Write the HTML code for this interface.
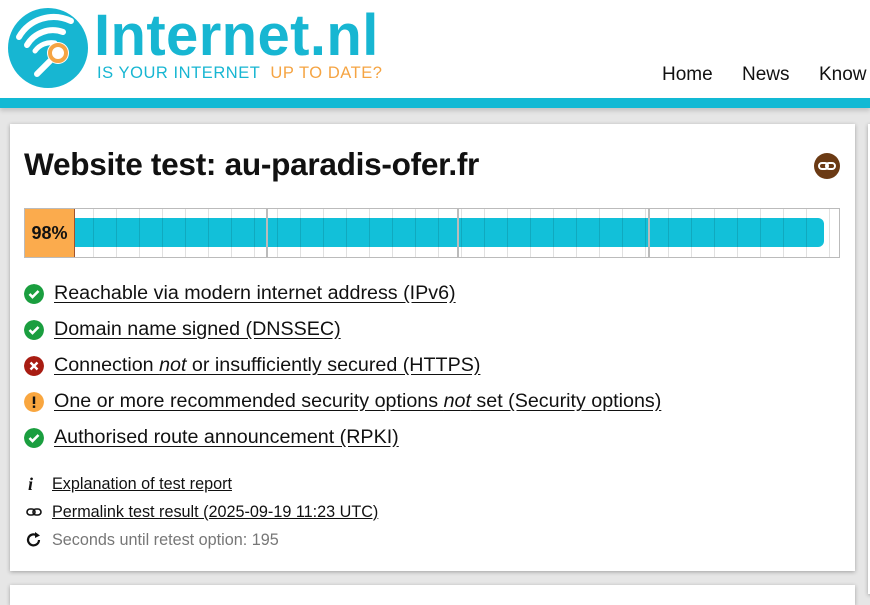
<!DOCTYPE html>
<html><head><meta charset="utf-8"><style>
*{margin:0;padding:0;box-sizing:border-box}
body{width:870px;height:590px;overflow:hidden;background:#e6e6e6;font-family:"Liberation Sans",sans-serif;position:relative}
.hdr{position:absolute;left:0;top:0;width:870px;height:98px;background:#fff}
.bar{position:absolute;left:0;top:98px;width:870px;height:10px;background:#12b9d4;box-shadow:0 3px 4px rgba(0,0,0,.15)}
.brand{position:absolute;left:94px;top:2px;font-size:58px;font-weight:bold;color:#17b6d2;letter-spacing:0.4px}
.tag{position:absolute;left:97px;top:64px;font-size:16.5px;color:#17b6d2;letter-spacing:0.55px}
.tag span{color:#f5a443}
.nav{position:absolute;top:64px;font-size:19px;color:#111}
.card{position:absolute;left:10px;top:124px;width:845px;height:447px;background:#fff;box-shadow:0 1px 4px rgba(0,0,0,.3)}
.card2{position:absolute;left:10px;top:585px;width:845px;height:20px;background:#fff;box-shadow:0 1px 4px rgba(0,0,0,.3)}
.card3{position:absolute;left:868px;top:124px;width:20px;height:470px;background:#fff;box-shadow:0 1px 4px rgba(0,0,0,.3)}
h1{position:absolute;left:14px;top:22px;font-size:31.6px;font-weight:bold;color:#111;letter-spacing:-0.3px}
.prog{position:absolute;left:14px;top:84px;width:816px;height:50px;border:1px solid #bbb;background:#fff}
.grid{position:absolute;left:0;top:0;width:814px;height:48px;background-image:repeating-linear-gradient(90deg,transparent 0 22px,rgba(0,0,0,.12) 22px 23px)}
.pct{position:absolute;left:0;top:0;width:50px;height:48px;background:#fbab4d;border-right:1px solid #a0522d;font-weight:bold;font-size:18px;line-height:48px;text-align:center;color:#111}
.fill{position:absolute;left:50px;top:9px;width:749px;height:29px;background:#12c0d9;border-radius:0 6px 6px 0}
.tk{position:absolute;top:0;width:2px;height:48px;background:#bbb}
.it{position:absolute;left:44px;font-size:19.7px;color:#111;text-decoration:underline;text-underline-offset:3px}
.ic{position:absolute;left:14px;width:20px;height:20px;border-radius:50%}
.sm{position:absolute;left:42px;font-size:16.2px;color:#111}
</style></head><body>
<div class="hdr">
<svg style="position:absolute;left:7px;top:7px" width="82" height="82" viewBox="0 0 82 82">
<circle cx="41" cy="41" r="40" fill="#17b6d2"/>
<path d="M12 30 A40 40 0 0 1 64 14" stroke="#fff" stroke-width="6" fill="none" stroke-linecap="round"/>
<path d="M20 38 A30 30 0 0 1 56 25" stroke="#fff" stroke-width="6" fill="none" stroke-linecap="round"/>
<path d="M28 44 A20 20 0 0 1 48 36" stroke="#fff" stroke-width="5" fill="none" stroke-linecap="round"/>
<line x1="44" y1="53" x2="30" y2="67" stroke="#fff" stroke-width="6" stroke-linecap="round"/>
<circle cx="51" cy="46" r="11" fill="#fff"/>
<circle cx="51" cy="46" r="8" fill="none" stroke="#f5a443" stroke-width="4"/>
</svg>
<div class="brand">Internet.nl</div>
<div class="tag">IS YOUR INTERNET &nbsp;<span>UP TO DATE?</span></div>
<div class="nav" style="left:662px">Home</div>
<div class="nav" style="left:742px">News</div>
<div class="nav" style="left:819px">Know</div>
</div>
<div class="bar"></div>
<div class="card3"></div>
<div class="card2"></div>
<div class="card">
<h1>Website test: au-paradis-ofer.fr</h1>
<svg style="position:absolute;left:804px;top:29px" width="26" height="26" viewBox="0 0 26 26"><circle cx="13" cy="13" r="13" fill="#6b3a14"/><rect x="5" y="10" width="9" height="6" rx="3" fill="none" stroke="#fff" stroke-width="2"/><rect x="12" y="10" width="9" height="6" rx="3" fill="none" stroke="#fff" stroke-width="2"/></svg>
<div class="prog">
<div class="fill"></div>
<div class="grid"></div>
<div class="tk" style="left:241px"></div><div class="tk" style="left:432px"></div><div class="tk" style="left:623px"></div>
<div class="pct">98%</div>
</div>
<svg class="ic" style="top:160px" viewBox="0 0 20 20"><circle cx="10" cy="10" r="10" fill="#1a9e3f"/><path d="M5.5 10l3 3 6-6" stroke="#fff" stroke-width="2.6" fill="none"/></svg>
<div class="it" style="top:158px">Reachable via modern internet address (IPv6)</div>
<svg class="ic" style="top:196px" viewBox="0 0 20 20"><circle cx="10" cy="10" r="10" fill="#1a9e3f"/><path d="M5.5 10l3 3 6-6" stroke="#fff" stroke-width="2.6" fill="none"/></svg>
<div class="it" style="top:194px">Domain name signed (DNSSEC)</div>
<svg class="ic" style="top:232px" viewBox="0 0 20 20"><circle cx="10" cy="10" r="10" fill="#a81c12"/><path d="M6.5 6.5l7 7M13.5 6.5l-7 7" stroke="#fff" stroke-width="2.4"/></svg>
<div class="it" style="top:230px">Connection <i>not</i> or insufficiently secured (HTTPS)</div>
<svg class="ic" style="top:268px" viewBox="0 0 20 20"><circle cx="10" cy="10" r="10" fill="#f9a63f"/><rect x="8.8" y="4.5" width="2.4" height="7.5" fill="#111"/><rect x="8.8" y="13.5" width="2.4" height="2.4" fill="#111"/></svg>
<div class="it" style="top:266px">One or more recommended security options <i>not</i> set (Security options)</div>
<svg class="ic" style="top:304px" viewBox="0 0 20 20"><circle cx="10" cy="10" r="10" fill="#1a9e3f"/><path d="M5.5 10l3 3 6-6" stroke="#fff" stroke-width="2.6" fill="none"/></svg>
<div class="it" style="top:302px">Authorised route announcement (RPKI)</div>
<div class="sm" style="left:18px;top:350px;font-style:italic;font-weight:bold;font-family:'Liberation Serif',serif;font-size:18px">i</div>
<div class="sm" style="top:351px;text-decoration:underline">Explanation of test report</div>
<svg style="position:absolute;left:16px;top:383px" width="16" height="10" viewBox="0 0 16 10"><rect x="1" y="2" width="8" height="6" rx="3" fill="none" stroke="#111" stroke-width="1.6"/><rect x="7" y="2" width="8" height="6" rx="3" fill="none" stroke="#111" stroke-width="1.6"/></svg>
<div class="sm" style="top:379px;text-decoration:underline">Permalink test result (2025-09-19 11:23 UTC)</div>
<svg style="position:absolute;left:16px;top:408px" width="16" height="16" viewBox="0 0 16 16"><path d="M13 8A5.5 5.5 0 1 1 10 3" stroke="#111" stroke-width="2.2" fill="none"/><path d="M9 0l5 3.5-5 2.5z" fill="#111"/></svg>
<div class="sm" style="top:407px;color:#777">Seconds until retest option: 195</div>
</div>
</body></html>
